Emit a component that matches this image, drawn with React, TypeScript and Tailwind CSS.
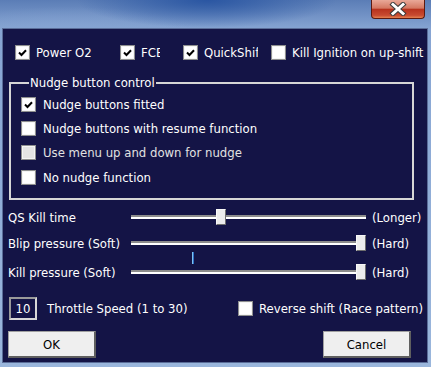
import React from "react";

const Check = ({ checked, disabled }: { checked?: boolean; disabled?: boolean }) => (
  <span
    className={`flex h-[15px] w-[15px] shrink-0 items-center justify-center border border-[#8e8f8f] shadow-[inset_0_0_0_1px_#f4f4f4] ${
      disabled ? "bg-[#e4e4e4]" : "bg-white"
    }`}
  >
    {checked && (
      <svg width="9" height="8" viewBox="0 0 9 8">
        <path d="M1 3.5 L3.5 6 L8 1.2" stroke="#000" strokeWidth="2" fill="none" />
      </svg>
    )}
  </span>
);

const Slider = ({ pos, tick }: { pos: number; tick?: boolean }) => (
  <div className="relative flex h-[16px] w-[235px] items-center">
    <div className="h-[4px] w-full bg-[linear-gradient(180deg,#8c8c8c_0_50%,#ffffff_50%_100%)]" />
    <div
      className="absolute top-0 h-[16px] w-[10px] border border-[#f8f8f8] border-r-[#6e6e6e] border-b-[#6e6e6e] bg-[#ececec]"
      style={{ left: pos }}
    />
    {tick && (
      <div className="absolute left-[61px] top-[17px] h-[12px] w-[2px] bg-[linear-gradient(90deg,#7ec3f0_0_50%,#2f6fc4_50%_100%)]" />
    )}
  </div>
);

const Button = ({ label }: { label: string }) => (
  <div className="flex h-[27px] w-[88px] items-center justify-center border border-[#a0a0a0] border-r-2 border-b-2 border-r-[#5f5f5f] border-b-[#5f5f5f] bg-[#efefef] text-black">
    {label}
  </div>
);

export default function App() {
  return (
    <div className="relative h-[367px] w-[431px] overflow-hidden bg-[radial-gradient(ellipse_130px_28px_at_48%_0%,#2a56a2_0%,transparent_100%),radial-gradient(ellipse_140px_30px_at_15%_10%,#86a4d2_0%,transparent_100%),linear-gradient(180deg,#5b7db6_0%,#87a5d3_8%,#9ab6dc_100%)] font-['DejaVu_Sans_Condensed','DejaVu_Sans',sans-serif] text-[13px] leading-[15px] text-white">
      {/* title bar */}
      <div className="flex h-[28px] justify-end pr-[6px]">
        <div className="flex h-[19px] w-[54px] items-center justify-center rounded-b-[4px] border border-t-0 border-[#5c1a10] bg-[linear-gradient(180deg,#e9a898_0%,#d47862_45%,#b8331e_52%,#c84a30_85%,#e58150_100%)]">
          <svg width="20" height="14" viewBox="0 0 20 14">
            <path d="M5 2.5 L15 11.5 M15 2.5 L5 11.5" stroke="#3c3c3c" strokeWidth="5" strokeLinecap="square" />
            <path d="M5 2.5 L15 11.5 M15 2.5 L5 11.5" stroke="#ffffff" strokeWidth="3" strokeLinecap="square" />
          </svg>
        </div>
      </div>

      {/* client area */}
      <div className="ml-[2px] flex h-[335px] w-[426px] flex-col bg-[#141446] pt-[17px] shadow-[inset_0_0_0_1px_#5a6d98]">
        <div className="flex h-[15px] items-center pl-[13px]">
          <div className="flex w-[105px] items-center gap-[6px]">
            <Check checked />
            <span>Power O2</span>
          </div>
          <div className="flex w-[63px] items-center gap-[6px]">
            <Check checked />
            <span className="w-[19px] overflow-hidden whitespace-nowrap">FCE</span>
          </div>
          <div className="flex w-[88px] items-center gap-[6px]">
            <Check checked />
            <span className="w-[54px] overflow-hidden whitespace-nowrap">QuickShift</span>
          </div>
          <div className="flex items-center gap-[6px]">
            <Check />
            <span className="whitespace-nowrap">Kill Ignition on up-shift</span>
          </div>
        </div>

        <fieldset className="ml-[7px] mt-[15px] w-[405px] border-2 border-[#d6d6d6] pb-[13px] pl-[10px]">
          <legend className="ml-[8px] px-[1px] leading-[15px]">Nudge button control</legend>
          <div className="mt-[7px] flex flex-col gap-[9px]">
            <div className="flex h-[15px] items-center gap-[7px]">
              <Check checked />
              <span>Nudge buttons fitted</span>
            </div>
            <div className="flex h-[15px] items-center gap-[7px]">
              <Check />
              <span>Nudge buttons with resume function</span>
            </div>
            <div className="flex h-[15px] items-center gap-[7px]">
              <Check disabled />
              <span className="text-[#e2e2e2]">Use menu up and down for nudge</span>
            </div>
            <div className="mt-[1px] flex h-[15px] items-center gap-[7px]">
              <Check />
              <span>No nudge function</span>
            </div>
          </div>
        </fieldset>

        <div className="mt-[9px] flex h-[16px] items-center pl-[6px]">
          <span className="w-[123px]">QS Kill time</span>
          <Slider pos={85} />
          <span className="ml-[6px]">(Longer)</span>
        </div>
        <div className="mt-[10px] flex h-[16px] items-center pl-[6px]">
          <span className="w-[123px]">Blip pressure (Soft)</span>
          <Slider pos={225} tick />
          <span className="ml-[6px]">(Hard)</span>
        </div>
        <div className="mt-[13px] flex h-[16px] items-center pl-[6px]">
          <span className="w-[123px]">Kill pressure (Soft)</span>
          <Slider pos={225} />
          <span className="ml-[6px]">(Hard)</span>
        </div>

        <div className="mt-[17px] flex h-[23px] items-center pl-[7px]">
          <div className="flex w-[229px] items-center gap-[10px]">
            <div className="flex h-[23px] w-[28px] items-center justify-center border-2 border-[#9a9a9a] border-r-[#d8d8d8] border-b-[#d8d8d8]">
              10
            </div>
            <span>Throttle Speed (1 to 30)</span>
          </div>
          <div className="flex items-center gap-[6px]">
            <Check />
            <span>Reverse shift (Race pattern)</span>
          </div>
        </div>

        <div className="mt-[11px] flex justify-between pl-[6px] pr-[17px]">
          <Button label="OK" />
          <Button label="Cancel" />
        </div>
      </div>
    </div>
  );
}
